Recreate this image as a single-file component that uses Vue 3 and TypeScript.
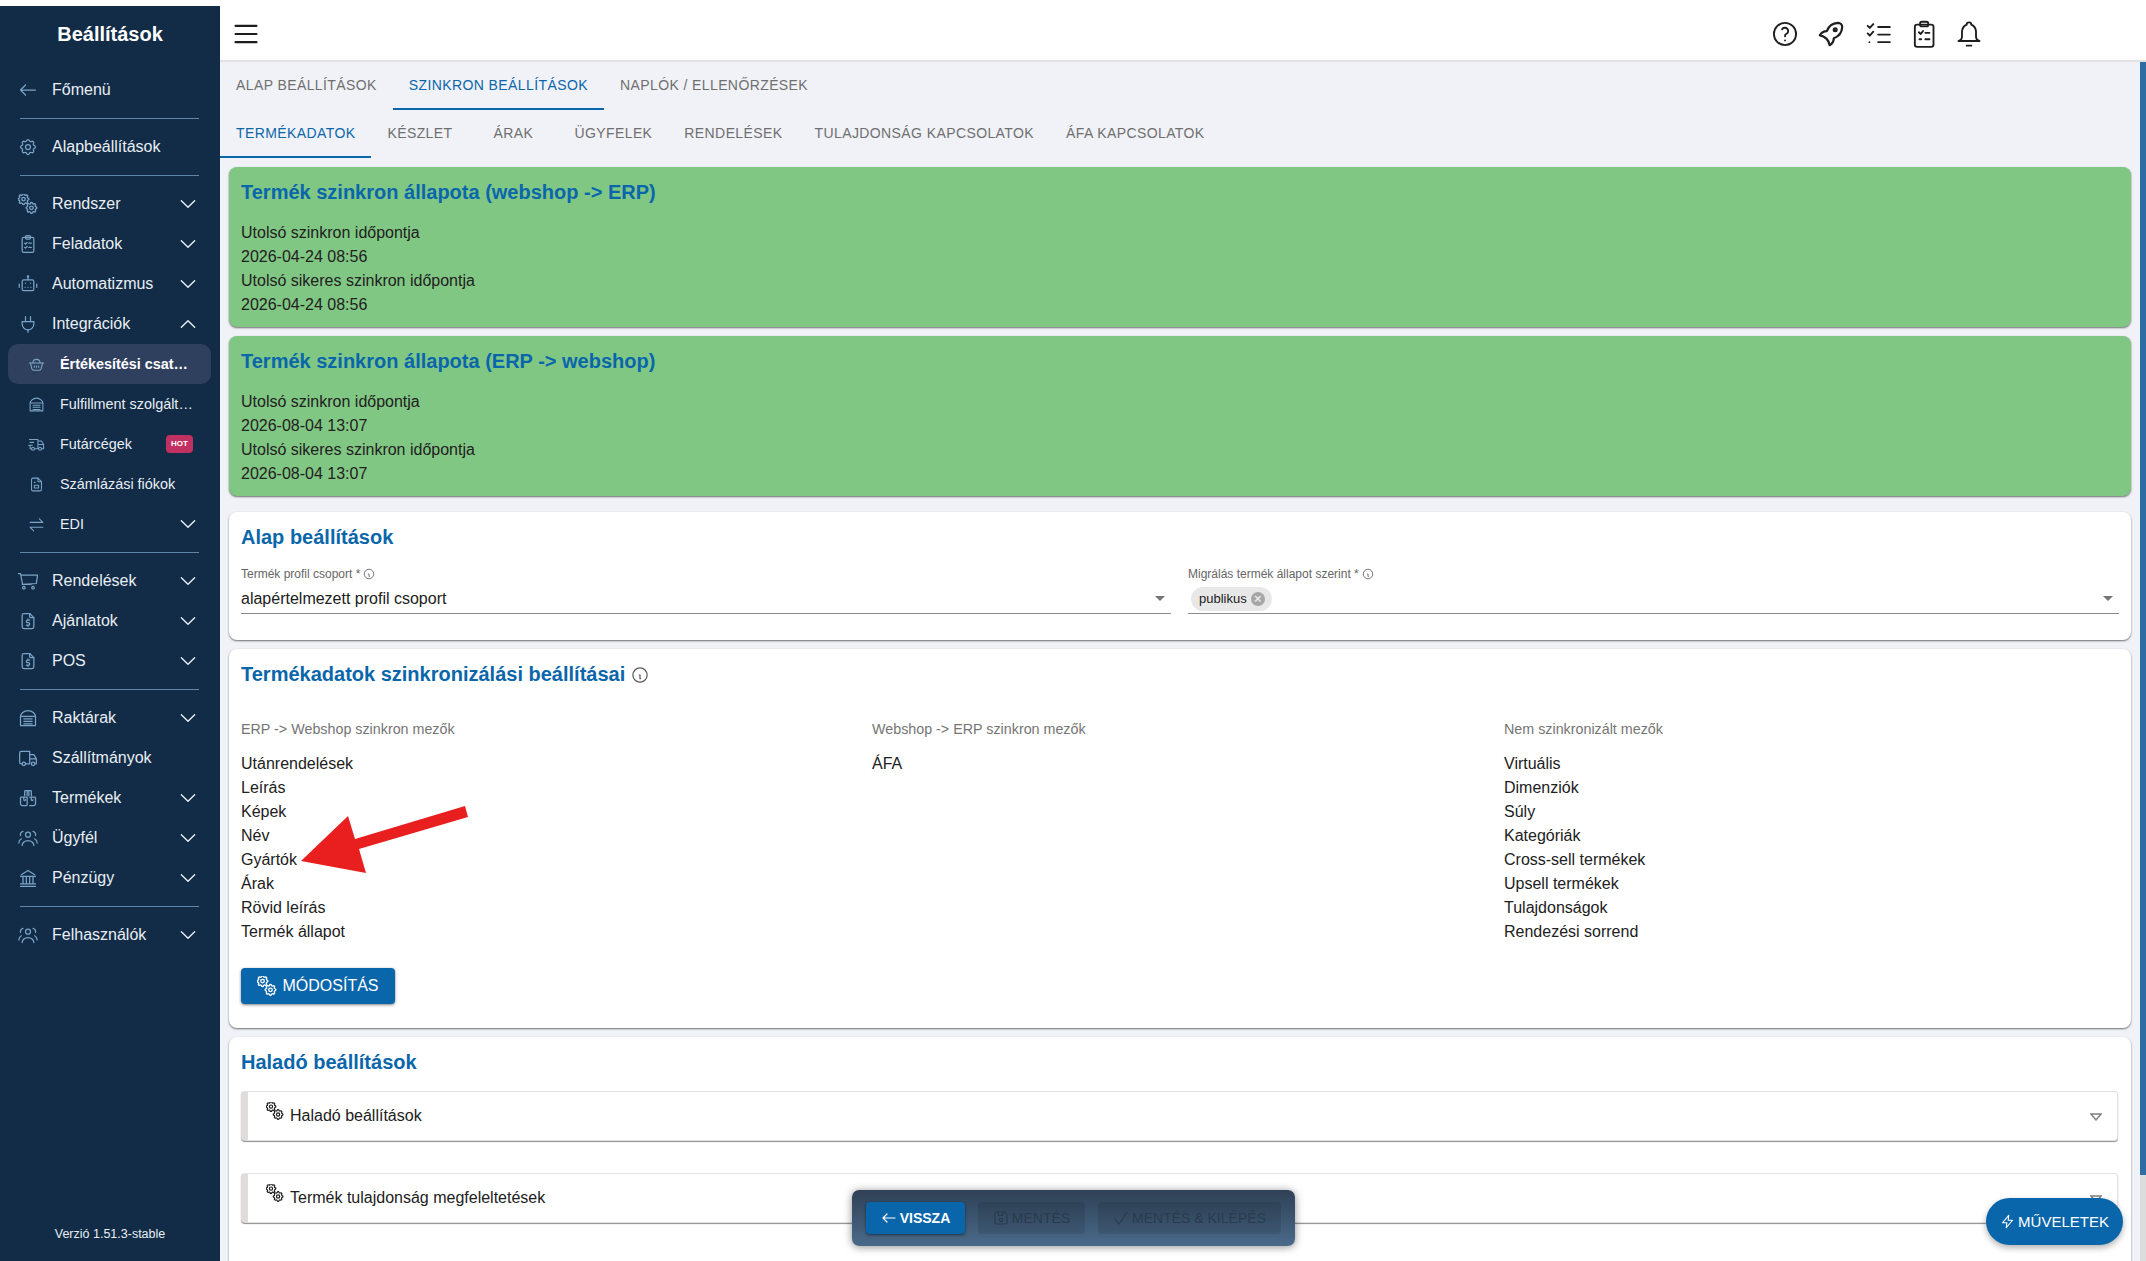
<script setup lang="ts">
const gear = 'M10.325 4.317c.426 -1.756 2.924 -1.756 3.35 0a1.724 1.724 0 0 0 2.573 1.066c1.543 -.94 3.31 .826 2.37 2.37a1.724 1.724 0 0 0 1.065 2.572c1.756 .426 1.756 2.924 0 3.35a1.724 1.724 0 0 0 -1.066 2.573c.94 1.543 -.826 3.31 -2.37 2.37a1.724 1.724 0 0 0 -2.572 1.065c-.426 1.756 -2.924 1.756 -3.35 0a1.724 1.724 0 0 0 -2.573 -1.066c-1.543 .94 -3.31 -.826 -2.37 -2.37a1.724 1.724 0 0 0 -1.065 -2.572c-1.756 -.426 -1.756 -2.924 0 -3.35a1.724 1.724 0 0 0 1.066 -2.573c-.94 -1.543 .826 -3.31 2.37 -2.37c1 .608 2.296 .07 2.572 -1.065z'
const fileBase = '<path d="M14 3v4a1 1 0 0 0 1 1h4"/><path d="M17 21h-10a2 2 0 0 1 -2 -2v-14a2 2 0 0 1 2 -2h7l5 5v11a2 2 0 0 1 -2 2z"/>'
const garage = '<path d="M3 21v-11c0 -3 4 -7 9 -7s9 4 9 7v11z"/><path d="M3 10h18M7 13h10M7 16h10M7 19h10"/>'
const people = '<circle cx="12" cy="8" r="3"/><path d="M5 21a7 6 0 0 1 14 0"/><path d="M6 4a4 4 0 0 0 -3 5M18 4a4 4 0 0 1 3 5M1 18a6 6 0 0 1 3 -5M23 18a6 6 0 0 0 -3 -5"/>'
const icons: Record<string, string> = {
  back: '<path d="M3 12h18M3 12l6 6M3 12l6 -6"/>',
  settings: `<path d="${gear}"/><circle cx="12" cy="12" r="3"/>`,
  gears: `<g stroke-width="2.2" transform="translate(-2 -2.500) scale(.72)"><path d="${gear}"/><circle cx="12" cy="12" r="3"/></g><g stroke-width="2.2" transform="translate(7.500 8) scale(.72)"><path d="${gear}"/><circle cx="12" cy="12" r="3"/></g>`,
  tasks: '<rect x="5" y="4" width="14" height="18" rx="2"/><rect x="9" y="2" width="6" height="4" rx="1.5"/><path d="M8 11l1 1 2 -2M8 16l1 1 2 -2M13 11h3M13 16h3"/>',
  robot: '<rect x="5" y="7" width="14" height="13" rx="2"/><path d="M12 3v4M1.5 12v4M22.5 12v4"/><circle cx="12" cy="3" r=".8"/><path d="M9 11v.01M15 11v.01M8.5 16h.01M12 16h.01M15.5 16h.01"/>',
  plug: '<path d="M5 9h14v3a7 7 0 0 1 -14 0z"/><path d="M9 3v6M15 3v6M12 19v3"/>',
  basket: '<path d="M7 10c0 -7 10 -7 10 0"/><path d="M2 10h20"/><path d="M3.500 10l2 8a2.500 2.500 0 0 0 2.500 2h8a2.500 2.500 0 0 0 2.500 -2l2 -8"/><path d="M9 14v2M12 14v2M15 14v2"/>',
  garage,
  delivery: '<circle cx="7" cy="18" r="2"/><circle cx="17" cy="18" r="2"/><path d="M5 18h-2v-4M2 5h12v13M9 18h6M19 18h3v-6h-8M14 7h5l3 5M3 9h5M1 13h5"/>',
  invoice: `${fileBase}<rect x="9" y="13" width="6" height="4" rx=".5"/><path d="M9 9h1"/>`,
  exchange: '<path d="M3 9h18l-5 -5M21 16h-18l5 5"/>',
  cart: '<circle cx="7" cy="20" r="1.500"/><circle cx="18" cy="20" r="1.500"/><path d="M16 16h-10.500l-2.500 -13h-2.500M3.500 5l20 0l-1.500 10l-17 1"/>',
  dollar: `${fileBase}<path d="M14 11h-2.500a1.500 1.500 0 0 0 0 3h1a1.500 1.500 0 0 1 0 3h-2.500M12 17v1.500M12 9.500v1.500"/>`,
  truck: '<circle cx="7" cy="19" r="2"/><circle cx="18" cy="19" r="2"/><path d="M5 19h-1a2 2 0 0 1 -2 -2v-11a2 2 0 0 1 2 -2h10v15M9 19h5M20 19h2v-6l-3 -5h-5M14 13h8"/>',
  box: '<path d="M8 9v-5a1 1 0 0 1 1 -1h6a1 1 0 0 1 1 1v5"/><path d="M11 3v6M13 3v6"/><path d="M4 11h7v9a1 1 0 0 1 -1 1h-5a2 2 0 0 1 -2 -2v-7a1 1 0 0 1 1 -1zM14 11h6a1 1 0 0 1 1 1v7a2 2 0 0 1 -2 2h-5M7 11v3a1 1 0 0 0 2 0M16 11v3a1 1 0 0 0 2 0"/>',
  people,
  bank: '<path d="M3 22h18M3 19h18M3 10h18M4 8l8 -5 8 5M6 10v9M10 10v9M14 10v9M18 10v9"/>',
  down: '<path d="M4 8l8 8 8 -8"/>',
  up: '<path d="M4 16l8 -8 8 8"/>',
  menu: '<path d="M3 5h18M3 12h18M3 19h18"/>',
  help: '<circle cx="12" cy="12" r="9.500"/><path d="M12 17.500v.01M12 14a2 2 0 0 1 1 -2a2.800 2.800 0 1 0 -3.500 -4"/>',
  rocket: '<g transform="translate(-2.400 -2.400) scale(1.200)"><path d="M4 13a8 8 0 0 1 7 7a6 6 0 0 0 3 -5a9 9 0 0 0 6 -8a3 3 0 0 0 -3 -3a9 9 0 0 0 -8 6a6 6 0 0 0 -5 3"/><circle cx="15" cy="9" r="1"/></g>',
  checklist: '<path d="M4 5l1.800 1.800 3 -3.300M4 11.500l1.800 1.800 3 -3.300M13 6h10M13 12.500h10M13 19h10M5.500 19v.01"/>',
  clip: '<rect x="5" y="4" width="16" height="19" rx="2"/><rect x="9.500" y="1.500" width="7" height="4" rx="1.500"/><path d="M8.500 10.500l1.500 1.500 2 -2.500M14 11h3.500M14 16.500h3.500M9 16.500h1.500"/>',
  bell: '<path d="M10 4a2 2 0 1 1 4 0a7 7 0 0 1 4 6v4a4 4 0 0 0 3 4h-18a4 4 0 0 0 3 -4v-4a7 7 0 0 1 4 -6"/><path d="M10 22h4"/>',
  info: '<circle cx="12" cy="12" r="9.500"/><path d="M12 8v.01M10.500 12h1.500v5h1.500"/>',
  save: '<path d="M6 3h11l4 4v12a2 2 0 0 1 -2 2h-14a2 2 0 0 1 -2 -2v-14a2 2 0 0 1 3 -2"/><circle cx="12" cy="15" r="2.500"/><path d="M15 3v5h-7v-5"/>',
  check: '<path d="M3 13l6 8 12 -18"/>',
  bolt: '<path d="M14 2l-1 8h7l-10 12 1 -8h-7z"/>'
}

interface Row { label: string; icon: string; arrow?: 'up' | 'down'; sub?: boolean; active?: boolean; hot?: boolean; line?: boolean }
const rows: Row[] = [
  { label: 'Főmenü', icon: 'back', line: true },
  { label: 'Alapbeállítások', icon: 'settings', line: true },
  { label: 'Rendszer', icon: 'gears', arrow: 'down' },
  { label: 'Feladatok', icon: 'tasks', arrow: 'down' },
  { label: 'Automatizmus', icon: 'robot', arrow: 'down' },
  { label: 'Integrációk', icon: 'plug', arrow: 'up' },
  { label: 'Értékesítési csatornák', icon: 'basket', sub: true, active: true },
  { label: 'Fulfillment szolgáltatók', icon: 'garage', sub: true },
  { label: 'Futárcégek', icon: 'delivery', sub: true, hot: true },
  { label: 'Számlázási fiókok', icon: 'invoice', sub: true },
  { label: 'EDI', icon: 'exchange', sub: true, arrow: 'down', line: true },
  { label: 'Rendelések', icon: 'cart', arrow: 'down' },
  { label: 'Ajánlatok', icon: 'dollar', arrow: 'down' },
  { label: 'POS', icon: 'dollar', arrow: 'down', line: true },
  { label: 'Raktárak', icon: 'garage', arrow: 'down' },
  { label: 'Szállítmányok', icon: 'truck' },
  { label: 'Termékek', icon: 'box', arrow: 'down' },
  { label: 'Ügyfél', icon: 'people', arrow: 'down' },
  { label: 'Pénzügy', icon: 'bank', arrow: 'down', line: true },
  { label: 'Felhasználók', icon: 'people', arrow: 'down' }
]
const topIcons = ['help', 'rocket', 'checklist', 'clip', 'bell']
const tabs1 = ['Alap beállítások', 'Szinkron beállítások', 'Naplók / ellenőrzések']
const tabs2 = ['Termékadatok', 'Készlet', 'Árak', 'Ügyfelek', 'Rendelések', 'Tulajdonság kapcsolatok', 'Áfa kapcsolatok']
const statuses = [
  { title: 'Termék szinkron állapota (webshop -> ERP)', a: '2026-04-24 08:56', b: '2026-04-24 08:56' },
  { title: 'Termék szinkron állapota (ERP -> webshop)', a: '2026-08-04 13:07', b: '2026-08-04 13:07' }
]
const columns = [
  { head: 'ERP -> Webshop szinkron mezők', items: ['Utánrendelések', 'Leírás', 'Képek', 'Név', 'Gyártók', 'Árak', 'Rövid leírás', 'Termék állapot'] },
  { head: 'Webshop -> ERP szinkron mezők', items: ['ÁFA'] },
  { head: 'Nem szinkronizált mezők', items: ['Virtuális', 'Dimenziók', 'Súly', 'Kategóriák', 'Cross-sell termékek', 'Upsell termékek', 'Tulajdonságok', 'Rendezési sorrend'] }
]
const panels = ['Haladó beállítások', 'Termék tulajdonság megfeleltetések']
</script>

<template>
  <div class="app">
    <aside class="side">
      <div class="side-title">Beállítások</div>
      <template v-for="r in rows" :key="r.label">
        <div class="row" :class="{ sub: r.sub, active: r.active }">
          <svg class="ico" viewBox="0 0 24 24" v-html="icons[r.icon]"></svg>
          <span class="row-label">{{ r.label }}</span>
          <span v-if="r.hot" class="hot">HOT</span>
          <svg v-if="r.arrow" class="chev" viewBox="0 0 24 24" v-html="icons[r.arrow]"></svg>
        </div>
        <div v-if="r.line" class="side-line"></div>
      </template>
      <div class="version">Verzió 1.51.3-stable</div>
    </aside>

    <div class="main">
      <header class="top">
        <svg class="burger" viewBox="0 0 24 24" v-html="icons.menu"></svg>
        <div class="top-icons">
          <svg v-for="i in topIcons" :key="i" class="top-ico" viewBox="0 0 24 24" v-html="icons[i]"></svg>
        </div>
      </header>

      <div class="body">
        <div class="content">
          <nav class="tabs">
            <div v-for="(t, i) in tabs1" :key="t" class="tab" :class="{ on: i === 1 }">{{ t }}</div>
          </nav>
          <nav class="tabs">
            <div v-for="(t, i) in tabs2" :key="t" class="tab wide" :class="{ on: i === 0 }">{{ t }}</div>
          </nav>

          <div class="cards">
            <section v-for="s in statuses" :key="s.title" class="card green">
              <h2>{{ s.title }}</h2>
              <p>Utolsó szinkron időpontja</p>
              <p>{{ s.a }}</p>
              <p>Utolsó sikeres szinkron időpontja</p>
              <p>{{ s.b }}</p>
            </section>

            <section class="card basic">
              <h2>Alap beállítások</h2>
              <div class="fields">
                <div class="field">
                  <label>Termék profil csoport * <svg class="mini" viewBox="0 0 24 24" v-html="icons.info"></svg></label>
                  <div class="control">
                    <span>alapértelmezett profil csoport</span>
                    <i class="caret"></i>
                  </div>
                </div>
                <div class="field">
                  <label>Migrálás termék állapot szerint * <svg class="mini" viewBox="0 0 24 24" v-html="icons.info"></svg></label>
                  <div class="control">
                    <span class="chip">publikus <b class="chip-x">×</b></span>
                    <i class="caret"></i>
                  </div>
                </div>
              </div>
            </section>

            <section class="card sync">
              <h2>Termékadatok szinkronizálási beállításai <svg class="h-info" viewBox="0 0 24 24" v-html="icons.info"></svg></h2>
              <div class="cols">
                <div v-for="(c, n) in columns" :key="c.head" class="col">
                  <div class="col-head">{{ c.head }}</div>
                  <div class="col-list">
                    <div v-for="it in c.items" :key="it">{{ it }}</div>
                    <svg v-if="n === 0" class="arrow" viewBox="0 0 176 70">
                      <polygon points="5,55 52,10 59,33 169,0 172,11 63,43 70,67" />
                    </svg>
                  </div>
                </div>
              </div>
              <button class="btn">
                <svg class="btn-ico" viewBox="0 0 24 24" v-html="icons.gears"></svg>
                Módosítás
              </button>
            </section>

            <section class="card adv">
              <h2>Haladó beállítások</h2>
              <div v-for="p in panels" :key="p" class="panel">
                <svg class="panel-ico" viewBox="0 0 24 24" v-html="icons.gears"></svg>
                <span>{{ p }}</span>
                <svg class="tri" viewBox="0 0 12 8"><path d="M1 1h10l-5 6z" /></svg>
              </div>
            </section>
          </div>
        </div>
        <div class="track"><div class="thumb"></div></div>
      </div>

      <div class="dock">
        <button class="dock-btn primary"><svg viewBox="0 0 24 24" v-html="icons.back"></svg>Vissza</button>
        <button class="dock-btn off save"><svg viewBox="0 0 24 24" v-html="icons.save"></svg>Mentés</button>
        <button class="dock-btn off exit"><svg viewBox="0 0 24 24" v-html="icons.check"></svg>Mentés &amp; kilépés</button>
      </div>
      <button class="fab"><svg viewBox="0 0 24 24" v-html="icons.bolt"></svg>Műveletek</button>
    </div>
  </div>
</template>

<style>
html, body { margin: 0; background: #fff; }
</style>

<style scoped>
* { box-sizing: border-box; }
.app {
  display: flex; height: 100vh; overflow: hidden;
  font-family: "Liberation Sans", Arial, sans-serif; color: #212121; font-size: 16px;
}
.side {
  width: 220px; flex: none; margin-top: 6px; background: #122b46; color: #e8eef4;
  display: flex; flex-direction: column; padding-top: 8px; position: relative;
}
.side-title { color: #fff; font-weight: 700; font-size: 20px; line-height: 40px; text-align: center; margin-bottom: 16px; }
.row { height: 40px; display: flex; align-items: center; padding: 0 22px 0 18px; font-size: 16px; flex: none; }
.ico { width: 20px; height: 20px; margin-right: 14px; flex: none; fill: none; stroke: #7ba4c7; stroke-width: 1.5; stroke-linecap: round; stroke-linejoin: round; }
.row-label { flex: 1; white-space: nowrap; overflow: hidden; text-overflow: ellipsis; min-width: 0; }
.chev { width: 20px; height: 20px; flex: none; margin-left: 4px; fill: none; stroke: #e8eef4; stroke-width: 1.7; stroke-linecap: round; stroke-linejoin: round; }
.sub { font-size: 14.400px; margin: 0 9px 0 8px; padding: 0 13px 0 20px; }
.sub .ico { width: 17px; height: 17px; margin-right: 15px; }
.active { background: #2f405f; border-radius: 10px; font-weight: 700; color: #fff; padding-right: 19px; }
.hot {
  background: #c03060; color: #fff; border-radius: 4px; font-size: 8px; font-weight: 700;
  width: 27px; height: 18px; line-height: 17px; text-align: center; flex: none; margin-right: 5px;
}
.side-line { height: 1px; background: #5f85a8; margin: 8px 21px 8px 20px; flex: none; }
.version { margin-top: auto; margin-bottom: 20px; text-align: center; font-size: 12.500px; color: #e8eef4; line-height: 14px; }

.main { flex: 1; min-width: 0; display: flex; flex-direction: column; position: relative; background: #f0f2f7; }
.top { height: 62px; flex: none; background: #fff; border-bottom: 2px solid #e2e2e2; display: flex; align-items: center; padding: 8px 0 0 12px; }
.burger { width: 28px; height: 28px; fill: none; stroke: #1c1c1c; stroke-width: 1.800; stroke-linecap: round; }
.top-icons { margin-left: auto; margin-right: 163px; display: flex; gap: 18px; }
.top-ico { width: 28px; height: 28px; fill: none; stroke: #1e1e1e; stroke-width: 1.600; stroke-linecap: round; stroke-linejoin: round; }

.body { flex: 1; min-height: 0; display: flex; }
.content { flex: 1; min-width: 0; overflow: hidden; }
.track { width: 6px; background: #dcdcdc; }
.thumb { height: 1113px; background: #2e6da4; }
.tabs { display: flex; height: 48px; }
.tab {
  padding: 0 16px; line-height: 46px; height: 48px; font-size: 14px; letter-spacing: .4px; text-transform: uppercase;
  color: #6f6f6f; white-space: nowrap; border-bottom: 2px solid transparent; text-align: center;
}
.wide { min-width: 90px; }
.on { color: #0a66ab; border-bottom-color: #0a66ab; }
.cards { padding: 9px 9px 0; display: flex; flex-direction: column; gap: 9px; }
.card { background: #fff; border-radius: 8px; box-shadow: 0 1px 2px rgba(0,0,0,.55); padding: 0 12px; flex: none; }
.card h2 { margin: 0; font-size: 20px; line-height: 24px; font-weight: 700; color: #0a66ab; }
.card p { margin: 0; line-height: 24px; font-size: 16px; }
.green { background: #81c784; height: 160px; padding-top: 13px; }
.green h2 { margin-bottom: 17px; }
.basic { height: 128px; margin-top: 7px; padding-top: 13px; }
.fields { display: grid; grid-template-columns: 930px 931px; column-gap: 17px; margin-top: 18px; }
.field label { display: flex; align-items: center; gap: 3px; font-size: 12px; line-height: 14px; color: #666; }
.mini { width: 12px; height: 12px; fill: none; stroke: #555; stroke-width: 1.600; }
.control { height: 33px; padding-top: 3px; display: flex; align-items: center; justify-content: space-between; border-bottom: 1px solid #8c8c8c; font-size: 16px; }
.caret { width: 0; height: 0; border-left: 5px solid transparent; border-right: 5px solid transparent; border-top: 5px solid #757575; margin-right: 6px; }
.chip { display: inline-flex; align-items: center; gap: 4px; height: 24px; background: #e8e8e8; border-radius: 12px; font-size: 13px; padding: 0 7px 0 8px; margin-left: 3px; }
.chip-x { width: 14px; height: 14px; border-radius: 50%; background: #a6a6a6; color: #e8e8e8; font-size: 13px; line-height: 13px; text-align: center; font-weight: 700; }
.sync { height: 379px; padding-top: 13px; }
.h-info { width: 18px; height: 18px; vertical-align: -3px; fill: none; stroke: #555; stroke-width: 1.600; }
.cols { display: grid; grid-template-columns: 631px 632px 1fr; margin-top: 33px; }
.col-head { font-size: 14.300px; line-height: 20px; color: #757575; margin-bottom: 13px; }
.col-list { line-height: 24px; font-size: 16px; position: relative; }
.arrow { position: absolute; left: 55px; top: 54px; width: 176px; height: 70px; fill: #e91f1f; }
.btn {
  margin-top: 24px; width: 154px; height: 36px; border: 0; border-radius: 4px; background: #0a66ab; color: #fff;
  font: 16px "Liberation Sans", Arial, sans-serif; text-transform: uppercase; display: flex; align-items: center; justify-content: center; gap: 5px;
  box-shadow: 0 1px 3px rgba(0,0,0,.5);
}
.btn-ico { width: 20px; height: 20px; fill: none; stroke: #fff; }
.adv { height: 300px; padding-top: 13px; }
.panel {
  position: relative; height: 50px; margin: 17px 1px 32px 0; border: 1px solid #e2e2e2; border-left: 7px solid #e0dcdc; border-radius: 4px;
  box-shadow: 0 1px 1px rgba(0,0,0,.45); display: flex; align-items: center; padding-left: 18px; font-size: 16px; background: #fff;
}
.panel + .panel { margin-top: 0; }
.panel-ico { width: 18px; height: 18px; margin: -10px 6px 0 0; fill: none; stroke: #1c1c1c; }
.tri { position: absolute; right: 15px; top: 21px; width: 12px; height: 8px; fill: none; stroke: #808080; stroke-width: 1.400; }

.dock {
  position: absolute; left: 632px; top: 1190px; width: 443px; height: 56px; border-radius: 7px; padding: 12px 14px;
  background: linear-gradient(#2f4156, #4a6a8a); box-shadow: 0 1px 8px rgba(0,0,0,.45); display: flex; gap: 13px;
}
.dock-btn {
  height: 32px; border: 0; border-radius: 4px; font: 14px "Liberation Sans", Arial, sans-serif; text-transform: uppercase;
  display: flex; align-items: center; justify-content: center; gap: 3px; padding: 0;
}
.dock-btn svg { width: 16px; height: 16px; fill: none; stroke: currentColor; stroke-width: 1.800; stroke-linecap: round; stroke-linejoin: round; }
.primary { width: 99px; background: #0a66ab; color: #fff; box-shadow: 0 1px 3px rgba(0,0,0,.5); font-weight: 700; }
.off { color: #2a3b4e; background: rgba(0,0,0,.1); }
.save { width: 107px; }
.exit { width: 183px; }
.fab {
  position: absolute; left: 1766px; top: 1198px; width: 137px; height: 47px; border: 0; border-radius: 24px; background: #0a66ab; color: #fff;
  font: 15px "Liberation Sans", Arial, sans-serif; text-transform: uppercase; display: flex; align-items: center; justify-content: center; gap: 3px;
  box-shadow: 0 3px 6px rgba(0,0,0,.3);
}
.fab svg { width: 15px; height: 15px; fill: none; stroke: #fff; stroke-width: 1.800; stroke-linejoin: round; }
</style>
